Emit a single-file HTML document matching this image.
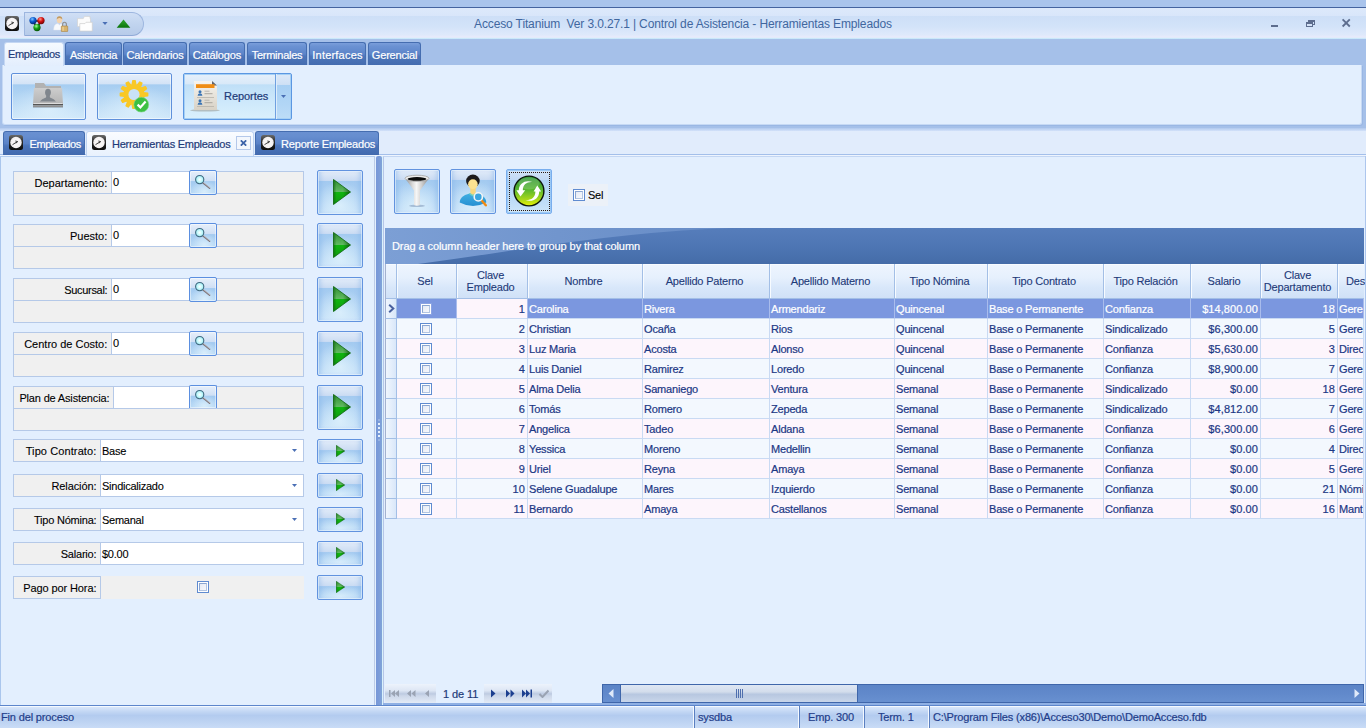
<!DOCTYPE html>
<html lang="es">
<head>
<meta charset="utf-8">
<title>Acceso Titanium</title>
<style>
*,*:before,*:after{box-sizing:border-box;margin:0;padding:0}
html,body{width:1366px;height:728px;overflow:hidden}
body{position:relative;-webkit-text-stroke:.2px;background:#e3effe;font-family:"Liberation Sans","DejaVu Sans",sans-serif;font-size:11px;color:#1e3a78;line-height:13px}
div,span,i,b,svg{position:absolute;white-space:nowrap}
b{font-weight:normal}
i{font-style:normal}
/* top chrome */
#topstrip{left:0;top:0;width:1366px;height:7px;background:#a9c4ec}
#topline{left:0;top:7px;width:1366px;height:1px;background:#44639f}
#titlebar{left:0;top:8px;width:1366px;height:31px;background:linear-gradient(#dde9fb 0,#d9e6fa 25%,#cddff7 26%,#d3e3f9 60%,#dfe9fb 88%,#e6eafb 90%,#e6eafb 95%,#d4effc 96%,#c4e3f8 100%)}
#title{-webkit-text-stroke:0;left:0;width:1366px;top:16px;text-align:center;font-size:12px;color:#41679f;line-height:16px;letter-spacing:-0.13px}
#qat{left:24px;top:12px;width:120px;height:24px;border:1px solid #9db6df;border-bottom-color:#8fa9d6;border-radius:0 12px 12px 0;background:linear-gradient(#d0dff5,#c1d4ef 50%,#b7cbe9)}
#tabstrip{left:0;top:39px;width:1366px;height:26px;background:linear-gradient(#c3d7f4 0,#a5c0e9 12%,#a5c0e9 100%)}
.rtab{top:42px;height:23px;padding-top:1px;border:1px solid #456db0;border-bottom:none;border-radius:3px 3px 0 0;background:linear-gradient(#7a9eda 0,#6b92d3 15%,#5d85c9 50%,#4d76ba 60%,#446cb0 100%);color:#fff;font-size:11px;line-height:23px;text-align:center;letter-spacing:-0.3px}
.rtab.on{background:linear-gradient(#f6faff,#e3eefd);color:#1e3a78;border-color:#c4d7f3;height:24px;padding-top:0}
#ribbon{left:2px;top:65px;width:1360px;height:60px;background:#e3effe;border:1px solid #c6d9f4;border-top:none;border-radius:0 0 3px 3px;box-shadow:1px 1px 0 #9ab7e4}
#ribside{left:0;top:39px;width:1366px;height:89px;background:#a5c0e9}
#ribbot{left:0;top:128px;width:1366px;height:3px;background:linear-gradient(#b0c8ee,#d3e2f9)}
.bigbtn{border:1px solid #5f90db;border-radius:2px;background:radial-gradient(ellipse 60% 55% at 50% 80%,rgba(225,243,253,.7),rgba(225,243,253,0)),linear-gradient(#e6effa 0,#d3e3f6 22%,#a6cdf1 24%,#b9d9f5 65%,#cfe7f9 100%);box-shadow:inset 0 0 0 1px rgba(255,255,255,.5)}
.bigbtn.hot{border-color:#5b97e2;background:linear-gradient(#e6f0fb 0,#d9e9f8 22%,#bfdff7 24%,#cde8fb 60%,#daf0fc 100%);box-shadow:inset 0 0 0 1px #a6d0f5}
/* doc tabs */
#docstrip{left:0;top:131px;width:1366px;height:24px;background:#e1ecfc}
.dtab{top:131px;height:24px;padding-top:1px;border:1px solid #456db0;border-bottom:none;border-radius:3px 3px 0 0;background:linear-gradient(#6a90d1 0,#668dcf 20%,#5a82c7 50%,#4b74b9 60%,#4169ae 100%);color:#fff;font-size:11px;line-height:23px;letter-spacing:-0.3px}
.dtab.on{background:linear-gradient(#fafcff,#e8f1fd);color:#1e3a78;border-color:#c0d4f2;height:25px}
#docline{left:0;top:154px;width:1366px;height:2px;background:linear-gradient(#a3bfea 50%,#eef4fe 50%)}
/* panels */
#left{left:0;top:156px;width:375px;height:549px;background:#e3effe;border:1px solid #b3cdf0;border-left-color:#aac6ed;border-right-color:#bccbe6;border-bottom:none}
#split{left:376px;top:156px;width:6px;height:549px;border-radius:2px 2px 0 0;background:linear-gradient(90deg,#7797d8 0,#7b9cd9 50%,#80a4d8 100%)}
#right{left:383px;top:156px;width:983px;height:549px;background:#e3effe;border:1px solid #c3d6f3;border-left-color:#b7c6e8;border-right:none;border-bottom:none;box-shadow:-1px 0 0 #d9f1fc}
/* form */
.grp{left:13px;width:291px;height:45px;background:#f0f0f0;border:1px solid #b5c9e8}
.grp .sep{left:0;top:21px;width:289px;height:1px;background:#b5c9e8}
.grp .vs{top:0;width:1px;height:21px;background:#b5c9e8}
.grp .in{top:0;height:21px;background:#fff}
.lab{-webkit-text-stroke:.1px;color:#000;text-align:right;font-size:11px;line-height:14px;letter-spacing:-0.05px}
.val{-webkit-text-stroke:.1px;color:#000;font-size:11px;line-height:14px;letter-spacing:-0.25px}
.sbtn{width:28px;height:25px;border:1px solid #5b8fe0;border-radius:2px;background:radial-gradient(ellipse 55% 50% at 55% 90%,rgba(225,243,253,.8),rgba(225,243,253,0)),linear-gradient(#e6effa 0,#d0e0f5 42%,#a3caf0 46%,#b6d8f5 100%);box-shadow:inset 0 0 0 1px rgba(255,255,255,.45)}
.play{left:317px;width:46px;height:45px;border:1px solid #6293df;border-radius:2px;background:radial-gradient(ellipse 60% 55% at 50% 80%,rgba(225,243,253,.8),rgba(225,243,253,0)),linear-gradient(#e3edf9 0,#cbdcf3 22%,#a3caf0 24%,#b2d5f4 70%,#c6e1f8 100%);box-shadow:inset 0 0 0 1px rgba(235,245,254,.6),inset 5px 0 5px -3px rgba(120,170,232,.5),inset -5px 0 5px -3px rgba(120,170,232,.5)}
.play.sm{height:25px;background:radial-gradient(ellipse 60% 50% at 50% 90%,rgba(225,243,253,.8),rgba(225,243,253,0)),linear-gradient(#e3edf9 0,#cbdcf3 42%,#a3caf0 46%,#b9daf6 100%)}
.play.foc{border-color:#79aeee;box-shadow:inset 0 0 0 1px #9cc8f4;background:linear-gradient(#d3e3f7 0,#c3d9f4 22%,#b0d3f5 24%,#bddbf7 70%,#cde5f9 100%)}
.row1{left:13px;width:291px;height:23px;background:#fff;border:1px solid #b5c9e8}
.row1 .l{left:0;top:0;width:87px;height:21px;background:#f0f0f0;border-right:1px solid #b5c9e8}
/* grid */
#groupby{left:385px;top:228px;width:979px;height:36px;background:linear-gradient(#567dbb 0,#4e76b4 50%,#456ca8 100%);overflow:hidden}
#groupby b{left:7px;top:0;color:#fff;font-size:11px;line-height:36px;letter-spacing:-0.08px}
.hd{-webkit-text-stroke:.1px;top:264px;height:35px;background:linear-gradient(#eef5fe 0,#e6f0fd 40%,#d8e7fa 70%,#d0e1f7 100%);border-right:1px solid #a3bfe6;border-bottom:1px solid #a3bfe6;box-shadow:inset 1px 1px 0 #f7fbff;color:#1e3a78;text-align:center;font-size:11px;line-height:12px;display:flex;align-items:center;justify-content:center;white-space:normal;letter-spacing:-0.2px;padding:0 3px 1px 0}
.gr{left:385px;width:979px;height:20px;overflow:hidden}
.gr span{top:0;height:20px;line-height:20px;font-size:11px;letter-spacing:-0.18px;border-right:1px solid #c9daf3;border-bottom:1px solid #c9daf3;padding:0 2px 0 1px;overflow:hidden;color:#1b3784;-webkit-text-stroke:.2px}
.gr.a span{background:#f3f8fe}
.gr.b span{background:#fdf5fc}
.gr.sel span{background:#7b97df;color:#fff;border-right-color:#a9bcec;border-bottom-color:#c9daf3}
.gr.sel span.foc{background:#fdf5fc;color:#1b3784}
.gr span.ind{left:0;width:12px;background:linear-gradient(90deg,#f0f6fe,#d9e7f9);border-left:1px solid #a3b1cf;border-right:1px solid #a3bfe6;border-bottom:1px solid #a3bfe6;padding:0}
.gr span.r{text-align:right;letter-spacing:0.08px}
.cb{width:12px;height:12px;border:1px solid #5f8bd0;background:#fff}
.gr.sel .cb{border-color:#8aa3e3}
.cb:after{content:"";position:absolute;left:1px;top:1px;width:8px;height:8px;border:1px solid;border-color:#8ba6d2 #b3c5e2 #b3c5e2 #8ba6d2;background:linear-gradient(135deg,#e6ebf5,#f6f8fc)}
/* navigator */
.nav{top:684px;height:19px;background:linear-gradient(#edf3fc 0,#dde6f4 35%,#bccae1 52%,#ccd7e9 62%,#e3ebf7 100%)}
#sb{left:602px;top:684px;width:762px;height:19px;background:linear-gradient(#5c85c7,#6189cb 50%,#6890d0);border:1px solid #3f66aa}
#thumb{left:17px;top:0;width:238px;height:17px;background:linear-gradient(#dfe7f3 0,#d3ddec 40%,#b7c7e0 55%,#c9d6ea 100%);border-left:1px solid #3f66aa;border-right:1px solid #3f66aa}
#rband{left:383px;top:703px;width:983px;height:2px;background:#8fb0e4}
#redge{left:1365px;top:156px;width:1px;height:547px;background:#adc6ed}
#gleft{left:385px;top:264px;width:1px;height:35px;background:#a3b1cf}
/* status */
#status{left:0;top:703px;width:1366px;height:25px;background:linear-gradient(rgba(0,0,0,0) 0,rgba(0,0,0,0) 8%,#5d86cc 8%,#5d86cc 12%,#f4f9ff 12%,#f4f9ff 16%,#d9e7fb 16%,#c3d7f4 34%,#b3cbef 50%,#bcd2f2 72%,#c9dcf6 100%);color:#1f3d8a;font-size:11px;line-height:22px;letter-spacing:-0.15px}
#status b{top:3px;height:22px}
#status i{top:3px;width:2px;height:22px;background:linear-gradient(90deg,#f4f9ff 50%,#5a7fc0 50%)}
</style>
</head>
<body>
<svg width="0" height="0" style="left:0;top:0"><defs><linearGradient id="ck" x1="0" y1="0" x2="0" y2="1"><stop offset="0" stop-color="#6a6a6a"/><stop offset=".45" stop-color="#2a2a2a"/><stop offset="1" stop-color="#0c0c0c"/></linearGradient><linearGradient id="pga" x1="0" y1="0" x2="0" y2="1"><stop offset="0" stop-color="#2f8f2f"/><stop offset=".5" stop-color="#62ba62"/><stop offset=".5" stop-color="#10b510"/><stop offset="1" stop-color="#0f9a0f"/></linearGradient><linearGradient id="pgb" x1="0" y1="0" x2="1" y2="0"><stop offset="0" stop-color="#0a5a0a" stop-opacity=".55"/><stop offset=".18" stop-color="#0a5a0a" stop-opacity="0"/><stop offset=".55" stop-color="#0a5a0a" stop-opacity="0"/><stop offset="1" stop-color="#063e06" stop-opacity=".75"/></linearGradient><radialGradient id="mg"><stop offset="0" stop-color="#ffffff"/><stop offset=".35" stop-color="#d9fcfd"/><stop offset="1" stop-color="#9ceef6"/></radialGradient></defs></svg>
<div id="topstrip"></div><div id="topline"></div><div id="titlebar"></div>
<div id="title">Acceso Titanium&nbsp; Ver 3.0.27.1 | Control de Asistencia - Herramientas Empleados</div>
<svg style="left:5px;top:16px" width="14" height="15" viewBox="0 0 14 15"><rect x="0" y="0" width="14" height="15" rx="2.5" fill="url(#ck)"/><circle cx="7" cy="7.5" r="5.7" fill="#f7f5f5"/><circle cx="7" cy="7.5" r="4.6" fill="none" stroke="#e9d9d9" stroke-width=".7" stroke-dasharray=".6 1.810"/><path d="M3.5 9.7 L8 6.8" stroke="#2a2a2a" stroke-width=".9"/><path d="M6.3 6 L8.8 6.6 L6.8 8.2" fill="none" stroke="#2a2a2a" stroke-width=".8"/></svg>
<div id="qat"></div>
<svg style="left:27px;top:15px" width="20" height="18" viewBox="0 0 20 18"><defs>
<radialGradient id="gb" cx=".4" cy=".3" r=".7"><stop offset="0" stop-color="#7fc4ff"/><stop offset=".5" stop-color="#0a5bd0"/><stop offset="1" stop-color="#062a78"/></radialGradient>
<radialGradient id="grd" cx=".4" cy=".3" r=".7"><stop offset="0" stop-color="#ff9a8a"/><stop offset=".5" stop-color="#d41010"/><stop offset="1" stop-color="#6e0505"/></radialGradient>
<radialGradient id="gg" cx=".4" cy=".3" r=".7"><stop offset="0" stop-color="#a7ff9a"/><stop offset=".5" stop-color="#12a012"/><stop offset="1" stop-color="#065006"/></radialGradient></defs>
<path d="M6 6 L14 6 L10 13 Z" fill="none" stroke="#222" stroke-width="1.6"/>
<circle cx="6" cy="5.6" r="3.6" fill="url(#gb)"/><circle cx="14" cy="5.6" r="3.6" fill="url(#grd)"/><circle cx="10" cy="12.6" r="3.6" fill="url(#gg)"/></svg>
<svg style="left:53px;top:15px" width="16" height="17" viewBox="0 0 16 17"><path d="M0.6 15 Q0.6 8.8 5 8.6 L6.5 10 L8 8.6 Q9.5 8.8 9.5 15 Z" fill="#f7f9fc" stroke="#dfe4ee" stroke-width=".4"/><ellipse cx="6.5" cy="4.9" rx="2.7" ry="3.3" fill="#f3d3ae"/><path d="M3.7 4.6 Q3.6 1.2 6.5 1.2 Q9.4 1.2 9.3 4.6 Q8.5 2.8 6.5 2.9 Q4.5 2.8 3.7 4.600Z" fill="#c09a62"/><path d="M9.6 11.2 V9.6 Q9.6 7.3 11.5 7.3 Q13.4 7.3 13.4 9.6 V11.2" fill="none" stroke="#8f8f8f" stroke-width="1.1"/><rect x="8.3" y="11" width="6.4" height="5.6" rx=".6" fill="#d8b46e" stroke="#a8823f" stroke-width=".6"/><rect x="9.3" y="11.8" width="1.6" height="4" fill="#ecd29a" opacity=".8"/></svg>
<svg style="left:77px;top:15px" width="17" height="17" viewBox="0 0 17 17"><path d="M0.5 3.6 H6.3 L7.3 1.4 H13 V3.6 H13.5 V11.5 H0.5 Z" fill="#fbfbfb" stroke="#d2d2d2" stroke-width=".7"/><path d="M2.8 8.6 H8 L9 7.3 H15.3 V16.1 H2.8 Z" fill="#fefefe" stroke="#cfcfcf" stroke-width=".7"/></svg>
<svg style="left:102px;top:22px" width="6" height="3" viewBox="0 0 7 4"><path d="M0 0 H7 L3.5 4 Z" fill="#4a6fb5"/></svg>
<svg style="left:116px;top:19px" width="15" height="9" viewBox="0 0 15 9"><defs><linearGradient id="gt" x1="0" y1="0" x2="0" y2="1"><stop offset="0" stop-color="#2fa52f"/><stop offset="1" stop-color="#0b740b"/></linearGradient></defs><path d="M7.5 0.6 L14.3 8.7 H0.7 Z" fill="url(#gt)"/></svg>
<svg style="left:1268px;top:16px" width="90" height="14" viewBox="0 0 90 14"><rect x="3" y="9" width="7" height="2" fill="#5d6d8e"/><rect x="40.5" y="4.5" width="6" height="4" fill="none" stroke="#5d6d8e" stroke-width="1"/><rect x="40" y="4" width="7" height="2" fill="#5d6d8e"/><rect x="38.5" y="6.5" width="6" height="4" fill="#d5e3f8" stroke="#5d6d8e" stroke-width="1"/><rect x="38" y="6" width="7" height="2" fill="#5d6d8e"/><path d="M74.6 3.3 L81.8 10.5 M81.8 3.3 L74.6 10.5" stroke="#5d6d8e" stroke-width="1.8"/></svg>
<div id="ribside"></div><div id="ribbon"></div><div id="ribbot"></div>
<div class="rtab on" style="left:4px;width:60px;letter-spacing:-0.36px">Empleados</div>
<div class="rtab" style="left:65px;width:57px;letter-spacing:-0.3px">Asistencia</div>
<div class="rtab" style="left:123px;width:64px;letter-spacing:-0.15px">Calendarios</div>
<div class="rtab" style="left:189px;width:56px;letter-spacing:-0.12px">Catálogos</div>
<div class="rtab" style="left:247px;width:60px;letter-spacing:-0.25px">Terminales</div>
<div class="rtab" style="left:309px;width:57px;letter-spacing:0.2px">Interfaces</div>
<div class="rtab" style="left:368px;width:53px;letter-spacing:-0.2px">Gerencial</div>
<div class="bigbtn" style="left:11px;top:73px;width:75px;height:47px"></div>
<div class="bigbtn" style="left:97px;top:73px;width:75px;height:47px"></div>
<div class="bigbtn hot" style="left:183px;top:73px;width:109px;height:47px"><i style="left:93px;top:1px;width:13px;height:43px;background:linear-gradient(#dbe8f8 0,#cfe0f5 22%,#a8cff3 24%,#b2d6f6 70%,#bcdcf7 100%)"></i><i style="left:91px;top:0;width:1px;height:45px;background:#6fa0e0"></i><i style="left:92px;top:0;width:1px;height:45px;background:#dcedfb"></i></div>
<svg style="left:32px;top:82px" width="32" height="27" viewBox="0 0 32 27"><defs><linearGradient id="fg" x1="0" y1="0" x2="0" y2="1"><stop offset="0" stop-color="#cdcdcd"/><stop offset="1" stop-color="#b4b4b4"/></linearGradient></defs>
<path d="M3 1 H12 L14 4 H29 V22 H3 Z" fill="#b2b2b2"/><path d="M2 6 H30 L31 22 H1 Z" fill="url(#fg)"/><rect x="1.5" y="21" width="29" height="1" fill="#dcdcdc"/><rect x="1" y="22" width="30" height="1.4" fill="#555"/><rect x="1" y="23.4" width="30" height="1.7" fill="#8f8f8f"/><rect x="1" y="25" width="30" height=".8" fill="#7d8894" opacity=".5"/>
<ellipse cx="16" cy="10.4" rx="2.9" ry="3.6" fill="#80868d"/><path d="M7.9 19.6 Q9.5 17 14 15.6 L14.4 12.8 H17.6 L18 15.6 Q22.5 17 23.9 19.6 Z" fill="#80868d"/></svg>
<svg style="left:119px;top:79px" width="34" height="36" viewBox="0 0 34 36"><path d="M13.8 1.8 L16.2 1.8 L16.9 5.9 L18.2 6.2 L20.8 3.0 L22.9 4.2 L21.4 8.1 L22.4 9.1 L26.3 7.6 L27.5 9.7 L24.3 12.3 L24.6 13.6 L28.7 14.3 L28.7 16.7 L24.6 17.4 L24.3 18.7 L27.5 21.3 L26.3 23.4 L22.4 21.9 L21.4 22.9 L22.9 26.8 L20.8 28.0 L18.2 24.8 L16.9 25.1 L16.2 29.2 L13.8 29.2 L13.1 25.1 L11.8 24.8 L9.2 28.0 L7.1 26.8 L8.6 22.9 L7.6 21.9 L3.7 23.4 L2.5 21.3 L5.7 18.7 L5.4 17.4 L1.3 16.7 L1.3 14.3 L5.4 13.6 L5.7 12.3 L2.5 9.7 L3.7 7.6 L7.6 9.1 L8.6 8.1 L7.1 4.2 L9.2 3.0 L11.8 6.2 L13.1 5.9Z" fill="#f9c825" stroke="#f9c825" stroke-width="1.4" stroke-linejoin="round"/><circle cx="15" cy="15.5" r="5.6" fill="#c9e2f8"/><circle cx="22.3" cy="25.7" r="7.4" fill="#3cc043"/><circle cx="22.3" cy="25.7" r="7.4" fill="none" stroke="#7fd98a" stroke-width=".6"/><path d="M18.6 25.6 L21.4 28.4 L26.6 22.6" fill="none" stroke="#fff" stroke-width="2.2"/></svg>
<svg style="left:190px;top:79px" width="32" height="34" viewBox="0 0 32 34"><defs><linearGradient id="dg" x1="0" y1="0" x2="0" y2="1"><stop offset="0" stop-color="#f6f4ef"/><stop offset="1" stop-color="#d8d2c6"/></linearGradient></defs>
<ellipse cx="15" cy="31.3" rx="15" ry="1.3" fill="#8b8678" opacity=".45"/>
<path d="M4 2 H22 L27 6.5 V31 H4 Z" fill="url(#dg)"/><path d="M22 2 L27 6.5 H22 Z" fill="#5d6470"/>
<g transform="translate(0,-.8)"><rect x="6" y="6" width="18.5" height="3.8" fill="#ef8d14"/>
<circle cx="10" cy="13.5" r="1.5" fill="#3a74b4"/><path d="M7.6 17.5 Q7.6 15 10 15 Q12.4 15 12.4 17.5 Z" fill="#3a74b4"/><rect x="14.5" y="12.5" width="5" height="1" fill="#b9b6ae"/><rect x="14.5" y="15" width="8" height="1" fill="#a9a69e"/>
<rect x="7" y="19" width="17" height=".8" fill="#b7b3aa"/>
<circle cx="10" cy="22.5" r="1.5" fill="#3a74b4"/><path d="M7.6 26.5 Q7.6 24 10 24 Q12.4 24 12.4 26.5 Z" fill="#3a74b4"/><rect x="14.5" y="21.5" width="5" height="1" fill="#b9b6ae"/><rect x="14.5" y="24" width="8" height="1" fill="#a9a69e"/>
<rect x="7" y="28" width="17" height=".8" fill="#b7b3aa"/></g></svg>
<div style="left:224px;top:89px;font-size:11px;line-height:14px;color:#1e3a78;letter-spacing:-0.05px">Reportes</div>
<svg style="left:281px;top:95px" width="5" height="3" viewBox="0 0 7 4"><path d="M0 0 H7 L3.5 4 Z" fill="#4a6fb5"/></svg>
<div id="docstrip"></div><div id="docline"></div>
<div class="dtab" style="left:3px;width:82px"><b style="left:25.500px;letter-spacing:-.42px">Empleados</b></div><svg style="left:9px;top:135px" width="14" height="15" viewBox="0 0 14 15"><rect x="0" y="0" width="14" height="15" rx="2.5" fill="url(#ck)"/><circle cx="7" cy="7.5" r="5.7" fill="#f7f5f5"/><circle cx="7" cy="7.5" r="4.6" fill="none" stroke="#e9d9d9" stroke-width=".7" stroke-dasharray=".6 1.810"/><path d="M3.5 9.7 L8 6.8" stroke="#2a2a2a" stroke-width=".9"/><path d="M6.3 6 L8.8 6.6 L6.8 8.2" fill="none" stroke="#2a2a2a" stroke-width=".8"/></svg>
<div class="dtab on" style="left:86px;width:168px"><b style="left:25px;letter-spacing:-.26px">Herramientas Empleados</b></div><svg style="left:92px;top:135px" width="14" height="15" viewBox="0 0 14 15"><rect x="0" y="0" width="14" height="15" rx="2.5" fill="url(#ck)"/><circle cx="7" cy="7.5" r="5.7" fill="#f7f5f5"/><circle cx="7" cy="7.5" r="4.6" fill="none" stroke="#e9d9d9" stroke-width=".7" stroke-dasharray=".6 1.810"/><path d="M3.5 9.7 L8 6.8" stroke="#2a2a2a" stroke-width=".9"/><path d="M6.3 6 L8.8 6.6 L6.8 8.2" fill="none" stroke="#2a2a2a" stroke-width=".8"/></svg>
<div style="left:236px;top:136px;width:15px;height:14px;border:1px solid #b4c8ea;background:#f3f7fd"></div><svg style="left:240px;top:140px" width="7" height="6" viewBox="0 0 7 6"><path d="M0.8 0.3 L6.2 5.7 M6.2 0.3 L0.8 5.7" stroke="#3b62a8" stroke-width="1.7"/></svg>
<div class="dtab" style="left:255px;width:124px"><b style="left:25px;letter-spacing:-.18px">Reporte Empleados</b></div><svg style="left:261px;top:135px" width="14" height="15" viewBox="0 0 14 15"><rect x="0" y="0" width="14" height="15" rx="2.5" fill="url(#ck)"/><circle cx="7" cy="7.5" r="5.7" fill="#f7f5f5"/><circle cx="7" cy="7.5" r="4.6" fill="none" stroke="#e9d9d9" stroke-width=".7" stroke-dasharray=".6 1.810"/><path d="M3.5 9.7 L8 6.8" stroke="#2a2a2a" stroke-width=".9"/><path d="M6.3 6 L8.8 6.6 L6.8 8.2" fill="none" stroke="#2a2a2a" stroke-width=".8"/></svg>
<div id="left"></div><div id="split"></div><div id="right"></div>
<svg style="left:377px;top:418px" width="4" height="24" viewBox="0 0 4 24"><rect x="1" y="1" width="2" height="2" fill="#e6f0fd" opacity="0.25"/><rect x="1" y="5" width="2" height="2" fill="#e6f0fd" opacity="1"/><rect x="1" y="9" width="2" height="2" fill="#e6f0fd" opacity="1"/><rect x="1" y="13" width="2" height="2" fill="#e6f0fd" opacity="1"/><rect x="1" y="17" width="2" height="2" fill="#e6f0fd" opacity="1"/><rect x="1" y="21" width="2" height="2" fill="#e6f0fd" opacity="0.25"/></svg>
<div class="grp" style="top:171px"><i class="in" style="left:97px;width:78px"></i><i class="vs" style="left:97px"></i><i class="sep"></i><b class="lab" style="left:0;top:4px;width:93.3px;letter-spacing:0.0px">Departamento:</b><b class="val" style="left:99px;top:3px">0</b></div>
<div class="sbtn" style="left:189px;top:170px"></div><svg style="left:194px;top:174px" width="18" height="16" viewBox="0 0 18 16"><path d="M9 8.8 L15.6 14.2" stroke="#7d7478" stroke-width="1.5" stroke-linecap="round"/><path d="M9.4 8.4 L15.8 13.7" stroke="#d9dde6" stroke-width=".6" stroke-linecap="round"/><circle cx="5.7" cy="5.6" r="4.1" fill="url(#mg)" stroke="#41697f" stroke-width="1.1"/></svg>
<div class="play" style="top:170px"></div><svg style="left:332.6px;top:179px" width="18" height="26" viewBox="0 0 18 26" preserveAspectRatio="none"><path d="M0.5 0.5 L17.5 13 L0.5 25.5 Z" fill="url(#pga)"/><path d="M0.5 0.5 L17.5 13 L0.5 25.5 Z" fill="url(#pgb)" stroke="#0c640c" stroke-width=".8"/></svg>
<div class="grp" style="top:224px"><i class="in" style="left:97px;width:78px"></i><i class="vs" style="left:97px"></i><i class="sep"></i><b class="lab" style="left:0;top:4px;width:93.3px;letter-spacing:0.0px">Puesto:</b><b class="val" style="left:99px;top:3px">0</b></div>
<div class="sbtn" style="left:189px;top:223px"></div><svg style="left:194px;top:227px" width="18" height="16" viewBox="0 0 18 16"><path d="M9 8.8 L15.6 14.2" stroke="#7d7478" stroke-width="1.5" stroke-linecap="round"/><path d="M9.4 8.4 L15.8 13.7" stroke="#d9dde6" stroke-width=".6" stroke-linecap="round"/><circle cx="5.7" cy="5.6" r="4.1" fill="url(#mg)" stroke="#41697f" stroke-width="1.1"/></svg>
<div class="play" style="top:223px"></div><svg style="left:332.6px;top:232px" width="18" height="26" viewBox="0 0 18 26" preserveAspectRatio="none"><path d="M0.5 0.5 L17.5 13 L0.5 25.5 Z" fill="url(#pga)"/><path d="M0.5 0.5 L17.5 13 L0.5 25.5 Z" fill="url(#pgb)" stroke="#0c640c" stroke-width=".8"/></svg>
<div class="grp" style="top:278px"><i class="in" style="left:97px;width:78px"></i><i class="vs" style="left:97px"></i><i class="sep"></i><b class="lab" style="left:0;top:4px;width:93.3px;letter-spacing:-0.3px">Sucursal:</b><b class="val" style="left:99px;top:3px">0</b></div>
<div class="sbtn" style="left:189px;top:277px"></div><svg style="left:194px;top:281px" width="18" height="16" viewBox="0 0 18 16"><path d="M9 8.8 L15.6 14.2" stroke="#7d7478" stroke-width="1.5" stroke-linecap="round"/><path d="M9.4 8.4 L15.8 13.7" stroke="#d9dde6" stroke-width=".6" stroke-linecap="round"/><circle cx="5.7" cy="5.6" r="4.1" fill="url(#mg)" stroke="#41697f" stroke-width="1.1"/></svg>
<div class="play" style="top:277px"></div><svg style="left:332.6px;top:286px" width="18" height="26" viewBox="0 0 18 26" preserveAspectRatio="none"><path d="M0.5 0.5 L17.5 13 L0.5 25.5 Z" fill="url(#pga)"/><path d="M0.5 0.5 L17.5 13 L0.5 25.5 Z" fill="url(#pgb)" stroke="#0c640c" stroke-width=".8"/></svg>
<div class="grp" style="top:332px"><i class="in" style="left:97px;width:78px"></i><i class="vs" style="left:97px"></i><i class="sep"></i><b class="lab" style="left:0;top:4px;width:93.3px;letter-spacing:0.0px">Centro de Costo:</b><b class="val" style="left:99px;top:3px">0</b></div>
<div class="sbtn" style="left:189px;top:331px"></div><svg style="left:194px;top:335px" width="18" height="16" viewBox="0 0 18 16"><path d="M9 8.8 L15.6 14.2" stroke="#7d7478" stroke-width="1.5" stroke-linecap="round"/><path d="M9.4 8.4 L15.8 13.7" stroke="#d9dde6" stroke-width=".6" stroke-linecap="round"/><circle cx="5.7" cy="5.6" r="4.1" fill="url(#mg)" stroke="#41697f" stroke-width="1.1"/></svg>
<div class="play" style="top:331px"></div><svg style="left:332.6px;top:340px" width="18" height="26" viewBox="0 0 18 26" preserveAspectRatio="none"><path d="M0.5 0.5 L17.5 13 L0.5 25.5 Z" fill="url(#pga)"/><path d="M0.5 0.5 L17.5 13 L0.5 25.5 Z" fill="url(#pgb)" stroke="#0c640c" stroke-width=".8"/></svg>
<div class="grp" style="top:386px"><i class="in" style="left:99px;width:76px"></i><i class="vs" style="left:99px"></i><i class="sep"></i><b class="lab" style="left:0;top:4px;width:95.3px;letter-spacing:-0.16px">Plan de Asistencia:</b><b class="val" style="left:101px;top:3px"></b></div>
<div class="sbtn" style="left:189px;top:385px;height:23px;border-bottom:none;border-radius:2px 2px 0 0"></div><svg style="left:194px;top:389px" width="18" height="16" viewBox="0 0 18 16"><path d="M9 8.8 L15.6 14.2" stroke="#7d7478" stroke-width="1.5" stroke-linecap="round"/><path d="M9.4 8.4 L15.8 13.7" stroke="#d9dde6" stroke-width=".6" stroke-linecap="round"/><circle cx="5.7" cy="5.6" r="4.1" fill="url(#mg)" stroke="#41697f" stroke-width="1.1"/></svg>
<div class="play" style="top:385px"></div><svg style="left:332.6px;top:394px" width="18" height="26" viewBox="0 0 18 26" preserveAspectRatio="none"><path d="M0.5 0.5 L17.5 13 L0.5 25.5 Z" fill="url(#pga)"/><path d="M0.5 0.5 L17.5 13 L0.5 25.5 Z" fill="url(#pgb)" stroke="#0c640c" stroke-width=".8"/></svg>
<div class="row1" style="top:439px"><i class="l"></i><b class="lab" style="left:0;top:4px;width:82.400px;letter-spacing:0.1px">Tipo Contrato:</b><b class="val" style="left:88px;top:4px">Base</b></div>
<svg style="left:292px;top:449px" width="5" height="3" viewBox="0 0 7 4"><path d="M0 0 H7 L3.5 4 Z" fill="#4a6fb5"/></svg>
<div class="play sm" style="top:439px"></div><svg style="left:336px;top:445px" width="9" height="12" viewBox="0 0 18 26" preserveAspectRatio="none"><path d="M0.5 0.5 L17.5 13 L0.5 25.5 Z" fill="url(#pga)"/><path d="M0.5 0.5 L17.5 13 L0.5 25.5 Z" fill="url(#pgb)" stroke="#0c640c" stroke-width=".8"/></svg>
<div class="row1" style="top:474px"><i class="l"></i><b class="lab" style="left:0;top:4px;width:82.400px;letter-spacing:-0.1px">Relación:</b><b class="val" style="left:88px;top:4px">Sindicalizado</b></div>
<svg style="left:292px;top:484px" width="5" height="3" viewBox="0 0 7 4"><path d="M0 0 H7 L3.5 4 Z" fill="#4a6fb5"/></svg>
<div class="play sm" style="top:473px"></div><svg style="left:336px;top:479px" width="9" height="12" viewBox="0 0 18 26" preserveAspectRatio="none"><path d="M0.5 0.5 L17.5 13 L0.5 25.5 Z" fill="url(#pga)"/><path d="M0.5 0.5 L17.5 13 L0.5 25.5 Z" fill="url(#pgb)" stroke="#0c640c" stroke-width=".8"/></svg>
<div class="row1" style="top:508px"><i class="l"></i><b class="lab" style="left:0;top:4px;width:82.400px;letter-spacing:-0.22px">Tipo Nómina:</b><b class="val" style="left:88px;top:4px">Semanal</b></div>
<svg style="left:292px;top:518px" width="5" height="3" viewBox="0 0 7 4"><path d="M0 0 H7 L3.5 4 Z" fill="#4a6fb5"/></svg>
<div class="play sm" style="top:507px"></div><svg style="left:336px;top:513px" width="9" height="12" viewBox="0 0 18 26" preserveAspectRatio="none"><path d="M0.5 0.5 L17.5 13 L0.5 25.5 Z" fill="url(#pga)"/><path d="M0.5 0.5 L17.5 13 L0.5 25.5 Z" fill="url(#pgb)" stroke="#0c640c" stroke-width=".8"/></svg>
<div class="row1" style="top:542px"><i class="l"></i><b class="lab" style="left:0;top:4px;width:82.400px;letter-spacing:-0.2px">Salario:</b><b class="val" style="left:88px;top:4px">$0.00</b></div>
<div class="play sm" style="top:541px"></div><svg style="left:336px;top:547px" width="9" height="12" viewBox="0 0 18 26" preserveAspectRatio="none"><path d="M0.5 0.5 L17.5 13 L0.5 25.5 Z" fill="url(#pga)"/><path d="M0.5 0.5 L17.5 13 L0.5 25.5 Z" fill="url(#pgb)" stroke="#0c640c" stroke-width=".8"/></svg>
<div style="left:101px;top:576px;width:203px;height:23px;background:#f0f0f0"></div>
<div style="left:13px;top:576px;width:88px;height:23px;background:#f0f0f0;border:1px solid #b5c9e8"><b class="lab" style="left:0;top:4px;width:82.400px;letter-spacing:-.1px">Pago por Hora:</b></div>
<div class="cb" style="left:197px;top:581px"></div>
<div class="play sm" style="top:575px"></div><svg style="left:336px;top:581px" width="9" height="12" viewBox="0 0 18 26" preserveAspectRatio="none"><path d="M0.5 0.5 L17.5 13 L0.5 25.5 Z" fill="url(#pga)"/><path d="M0.5 0.5 L17.5 13 L0.5 25.5 Z" fill="url(#pgb)" stroke="#0c640c" stroke-width=".8"/></svg>
<div class="play" style="left:394px;top:169px"></div>
<div class="play" style="left:450px;top:169px"></div>
<div class="play foc" style="left:506px;top:169px"></div>
<div style="left:509px;top:172px;width:41px;height:39px;border:1px dotted #2a1a10"></div>
<svg style="left:403px;top:173px" width="28" height="36" viewBox="0 0 28 36"><defs><linearGradient id="fn" x1="0" y1="0" x2="1" y2="0"><stop offset="0" stop-color="#8e8e8e"/><stop offset=".3" stop-color="#d8d8d8"/><stop offset=".48" stop-color="#f6f6f6"/><stop offset=".7" stop-color="#cfcfcf"/><stop offset="1" stop-color="#8a8a8a"/></linearGradient></defs>
<ellipse cx="14" cy="32.8" rx="8" ry="1.2" fill="#6d84a8" opacity=".45"/>
<path d="M2.2 5.5 Q14 10.5 25.8 5.5 L17 17.5 V32 Q14 33.4 11 32 V17.5 Z" fill="url(#fn)"/>
<ellipse cx="14" cy="5.3" rx="12" ry="3.1" fill="#ececec" stroke="#a3a3a3" stroke-width=".8"/><ellipse cx="14" cy="5.9" rx="9.4" ry="1.8" fill="#0c0c0c"/></svg>
<svg style="left:458px;top:173px" width="30" height="36" viewBox="0 0 30 36"><defs><linearGradient id="ub" x1="0" y1="0" x2="0" y2="1"><stop offset="0" stop-color="#3fb0e3"/><stop offset="1" stop-color="#2790d2"/></linearGradient></defs>
<path d="M1.7 29.5 Q2 21.5 15 20 Q28 21.5 28.3 29.5 Q15 36.5 1.7 29.500Z" fill="url(#ub)"/>
<path d="M12.3 15 H17.7 V21 L15 23 L12.3 21Z" fill="#f7d77f"/><path d="M10.5 20.8 L15 23.6 L19.5 20.8 L18 20 L15 21.8 L12 20Z" fill="#6fd0c0"/>
<ellipse cx="14.9" cy="8" rx="6.8" ry="6.4" fill="#1c1a1c"/>
<ellipse cx="14.9" cy="11.3" rx="4.8" ry="5" fill="#fbe291"/>
<path d="M23 26.8 L27.8 32.3" stroke="#f08a12" stroke-width="2.4" stroke-linecap="round"/>
<circle cx="20.3" cy="23.9" r="4.1" fill="#3ba6e0" stroke="#f4f4f4" stroke-width="1.6"/></svg>
<svg style="left:512px;top:174px" width="34" height="34" viewBox="0 0 34 34"><defs><linearGradient id="rf" x1="0" y1="0" x2="0" y2="1"><stop offset="0" stop-color="#2f9436"/><stop offset=".45" stop-color="#57b72f"/><stop offset=".8" stop-color="#a9d81a"/><stop offset="1" stop-color="#e2ee08"/></linearGradient></defs>
<circle cx="17" cy="17" r="15.6" fill="#0c160c"/><circle cx="17" cy="17" r="14.2" fill="url(#rf)"/><ellipse cx="17" cy="9.5" rx="10.5" ry="6" fill="#fff" opacity=".16"/>
<path d="M4.4 16.2 H13.2 L8.5 22.6 Z M6.8 16.4 C6.8 9 14 5.5 20.3 8.1 C15 7.7 10.8 10.5 10.8 16.4 Z" fill="#fff"/>
<path d="M21.6 17.6 H29.2 L25.3 11.6 Z M27.2 17.4 C27.2 25 20 28.5 13.5 26 C19 26.3 23.4 23.5 23.4 17.4 Z" fill="#fff"/></svg>
<div style="left:568px;top:184px;width:40px;height:22px;background:#ecf1f8"></div><div class="cb" style="left:573px;top:189px"></div><div class="val" style="left:588px;top:188px">Sel</div>
<div id="groupby"><svg style="left:0;top:0" width="979" height="36" viewBox="0 0 979 36" preserveAspectRatio="none"><defs><linearGradient id="sw" x1="0" y1="0" x2="1" y2="0"><stop offset="0" stop-color="#7c9fd5"/><stop offset=".5" stop-color="#7195cd"/><stop offset="1" stop-color="#678cc6"/></linearGradient></defs><path d="M0 0 H346 Q250 3 112 24.7 Q70 31 33 36 H0 Z" fill="url(#sw)"/></svg><b>Drag a column header here to group by that column</b></div>
<div class="hd" style="left:385px;width:12px"></div>
<div class="hd" style="left:397px;width:60px">Sel</div>
<div class="hd" style="left:457px;width:71px">Clave Empleado</div>
<div class="hd" style="left:528px;width:115px">Nombre</div>
<div class="hd" style="left:643px;width:127px">Apellido Paterno</div>
<div class="hd" style="left:770px;width:125px">Apellido Materno</div>
<div class="hd" style="left:895px;width:93px">Tipo Nómina</div>
<div class="hd" style="left:988px;width:116px">Tipo Contrato</div>
<div class="hd" style="left:1104px;width:87px">Tipo Relación</div>
<div class="hd" style="left:1191px;width:70px">Salario</div>
<div class="hd" style="left:1261px;width:77px">Clave Departamento</div>
<div class="hd" style="left:1338px;width:26px;justify-content:flex-start;padding-left:8px;border-right:none">Des</div>
<div class="gr sel" style="top:299px"><span class="ind"><svg style="left:2px;top:5px" width="7" height="9" viewBox="0 0 7 9"><path d="M1.2 0.8 L5.3 4.5 L1.2 8.2" fill="none" stroke="#48609f" stroke-width="2"/></svg></span><span class="" style="left:12px;width:60px"><i class="cb" style="left:23px;top:4px"></i></span><span class="r foc" style="left:72px;width:71px">1</span><span class="" style="left:143px;width:115px">Carolina</span><span class="" style="left:258px;width:127px">Rivera</span><span class="" style="left:385px;width:125px">Armendariz</span><span class="" style="left:510px;width:93px">Quincenal</span><span class="" style="left:603px;width:116px">Base o Permanente</span><span class="" style="left:719px;width:87px">Confianza</span><span class="r" style="left:806px;width:70px">$14,800.00</span><span class="r" style="left:876px;width:77px">18</span><span class="" style="left:953px;width:26px">Geren</span></div>
<div class="gr a" style="top:319px"><span class="ind"></span><span class="" style="left:12px;width:60px"><i class="cb" style="left:23px;top:4px"></i></span><span class="r" style="left:72px;width:71px">2</span><span class="" style="left:143px;width:115px">Christian</span><span class="" style="left:258px;width:127px">Ocaña</span><span class="" style="left:385px;width:125px">Rios</span><span class="" style="left:510px;width:93px">Quincenal</span><span class="" style="left:603px;width:116px">Base o Permanente</span><span class="" style="left:719px;width:87px">Sindicalizado</span><span class="r" style="left:806px;width:70px">$6,300.00</span><span class="r" style="left:876px;width:77px">5</span><span class="" style="left:953px;width:26px">Geren</span></div>
<div class="gr b" style="top:339px"><span class="ind"></span><span class="" style="left:12px;width:60px"><i class="cb" style="left:23px;top:4px"></i></span><span class="r" style="left:72px;width:71px">3</span><span class="" style="left:143px;width:115px">Luz Maria</span><span class="" style="left:258px;width:127px">Acosta</span><span class="" style="left:385px;width:125px">Alonso</span><span class="" style="left:510px;width:93px">Quincenal</span><span class="" style="left:603px;width:116px">Base o Permanente</span><span class="" style="left:719px;width:87px">Confianza</span><span class="r" style="left:806px;width:70px">$5,630.00</span><span class="r" style="left:876px;width:77px">3</span><span class="" style="left:953px;width:26px">Direc</span></div>
<div class="gr a" style="top:359px"><span class="ind"></span><span class="" style="left:12px;width:60px"><i class="cb" style="left:23px;top:4px"></i></span><span class="r" style="left:72px;width:71px">4</span><span class="" style="left:143px;width:115px">Luis Daniel</span><span class="" style="left:258px;width:127px">Ramirez</span><span class="" style="left:385px;width:125px">Loredo</span><span class="" style="left:510px;width:93px">Quincenal</span><span class="" style="left:603px;width:116px">Base o Permanente</span><span class="" style="left:719px;width:87px">Confianza</span><span class="r" style="left:806px;width:70px">$8,900.00</span><span class="r" style="left:876px;width:77px">7</span><span class="" style="left:953px;width:26px">Geren</span></div>
<div class="gr b" style="top:379px"><span class="ind"></span><span class="" style="left:12px;width:60px"><i class="cb" style="left:23px;top:4px"></i></span><span class="r" style="left:72px;width:71px">5</span><span class="" style="left:143px;width:115px">Alma Delia</span><span class="" style="left:258px;width:127px">Samaniego</span><span class="" style="left:385px;width:125px">Ventura</span><span class="" style="left:510px;width:93px">Semanal</span><span class="" style="left:603px;width:116px">Base o Permanente</span><span class="" style="left:719px;width:87px">Sindicalizado</span><span class="r" style="left:806px;width:70px">$0.00</span><span class="r" style="left:876px;width:77px">18</span><span class="" style="left:953px;width:26px">Geren</span></div>
<div class="gr a" style="top:399px"><span class="ind"></span><span class="" style="left:12px;width:60px"><i class="cb" style="left:23px;top:4px"></i></span><span class="r" style="left:72px;width:71px">6</span><span class="" style="left:143px;width:115px">Tomás</span><span class="" style="left:258px;width:127px">Romero</span><span class="" style="left:385px;width:125px">Zepeda</span><span class="" style="left:510px;width:93px">Semanal</span><span class="" style="left:603px;width:116px">Base o Permanente</span><span class="" style="left:719px;width:87px">Sindicalizado</span><span class="r" style="left:806px;width:70px">$4,812.00</span><span class="r" style="left:876px;width:77px">7</span><span class="" style="left:953px;width:26px">Geren</span></div>
<div class="gr b" style="top:419px"><span class="ind"></span><span class="" style="left:12px;width:60px"><i class="cb" style="left:23px;top:4px"></i></span><span class="r" style="left:72px;width:71px">7</span><span class="" style="left:143px;width:115px">Angelica</span><span class="" style="left:258px;width:127px">Tadeo</span><span class="" style="left:385px;width:125px">Aldana</span><span class="" style="left:510px;width:93px">Semanal</span><span class="" style="left:603px;width:116px">Base o Permanente</span><span class="" style="left:719px;width:87px">Confianza</span><span class="r" style="left:806px;width:70px">$6,300.00</span><span class="r" style="left:876px;width:77px">6</span><span class="" style="left:953px;width:26px">Geren</span></div>
<div class="gr a" style="top:439px"><span class="ind"></span><span class="" style="left:12px;width:60px"><i class="cb" style="left:23px;top:4px"></i></span><span class="r" style="left:72px;width:71px">8</span><span class="" style="left:143px;width:115px">Yessica</span><span class="" style="left:258px;width:127px">Moreno</span><span class="" style="left:385px;width:125px">Medellin</span><span class="" style="left:510px;width:93px">Semanal</span><span class="" style="left:603px;width:116px">Base o Permanente</span><span class="" style="left:719px;width:87px">Confianza</span><span class="r" style="left:806px;width:70px">$0.00</span><span class="r" style="left:876px;width:77px">4</span><span class="" style="left:953px;width:26px">Direc</span></div>
<div class="gr b" style="top:459px"><span class="ind"></span><span class="" style="left:12px;width:60px"><i class="cb" style="left:23px;top:4px"></i></span><span class="r" style="left:72px;width:71px">9</span><span class="" style="left:143px;width:115px">Uriel</span><span class="" style="left:258px;width:127px">Reyna</span><span class="" style="left:385px;width:125px">Amaya</span><span class="" style="left:510px;width:93px">Semanal</span><span class="" style="left:603px;width:116px">Base o Permanente</span><span class="" style="left:719px;width:87px">Confianza</span><span class="r" style="left:806px;width:70px">$0.00</span><span class="r" style="left:876px;width:77px">5</span><span class="" style="left:953px;width:26px">Geren</span></div>
<div class="gr a" style="top:479px"><span class="ind"></span><span class="" style="left:12px;width:60px"><i class="cb" style="left:23px;top:4px"></i></span><span class="r" style="left:72px;width:71px">10</span><span class="" style="left:143px;width:115px">Selene Guadalupe</span><span class="" style="left:258px;width:127px">Mares</span><span class="" style="left:385px;width:125px">Izquierdo</span><span class="" style="left:510px;width:93px">Semanal</span><span class="" style="left:603px;width:116px">Base o Permanente</span><span class="" style="left:719px;width:87px">Confianza</span><span class="r" style="left:806px;width:70px">$0.00</span><span class="r" style="left:876px;width:77px">21</span><span class="" style="left:953px;width:26px">Nómin</span></div>
<div class="gr b" style="top:499px"><span class="ind"></span><span class="" style="left:12px;width:60px"><i class="cb" style="left:23px;top:4px"></i></span><span class="r" style="left:72px;width:71px">11</span><span class="" style="left:143px;width:115px">Bernardo</span><span class="" style="left:258px;width:127px">Amaya</span><span class="" style="left:385px;width:125px">Castellanos</span><span class="" style="left:510px;width:93px">Semanal</span><span class="" style="left:603px;width:116px">Base o Permanente</span><span class="" style="left:719px;width:87px">Confianza</span><span class="r" style="left:806px;width:70px">$0.00</span><span class="r" style="left:876px;width:77px">16</span><span class="" style="left:953px;width:26px">Mant</span></div>
<div class="nav" style="left:385px;width:51px"></div><div class="nav" style="left:484px;width:68px"></div>
<svg style="left:389px;top:689px" width="10" height="9" viewBox="0 0 10 9" fill="#9aa3b3"><rect x="0" y="1" width="1.5" height="7"/><path d="M6 1 V8 L2 4.500Z M10 1 V8 L6 4.500Z"/></svg><svg style="left:406px;top:689px" width="10" height="9" viewBox="0 0 10 9" fill="#9aa3b3"><path d="M5 1 V8 L1 4.500Z M9.5 1 V8 L5.5 4.500Z"/></svg><svg style="left:422px;top:689px" width="10" height="9" viewBox="0 0 10 9" fill="#9aa3b3"><path d="M7 1 V8 L3 4.500Z"/></svg>
<div style="left:443px;top:687px;font-size:11px;line-height:14px;color:#1e3a78;letter-spacing:-0.1px">1 de 11</div>
<svg style="left:488px;top:689px" width="10" height="9" viewBox="0 0 10 9" fill="#1c3f8f"><path d="M3 0.5 V8.5 L7.5 4.500Z"/></svg><svg style="left:505px;top:689px" width="10" height="9" viewBox="0 0 10 9" fill="#1c3f8f"><path d="M1 0.5 V8.5 L5 4.500Z M5.5 0.5 V8.5 L9.5 4.500Z"/></svg><svg style="left:522px;top:689px" width="10" height="9" viewBox="0 0 10 9" fill="#1c3f8f"><path d="M0 0.5 V8.5 L4 4.500Z M4 0.5 V8.5 L8 4.500Z"/><rect x="8.5" y="0.5" width="1.5" height="8"/></svg><svg style="left:539px;top:689px" width="10" height="9" viewBox="0 0 10 9" fill="#9aa3b3"><path d="M0.5 5 L3.5 8 L9.5 1.5" fill="none" stroke="#9aa3b3" stroke-width="2"/></svg>
<div id="sb"><i id="thumb"></i><svg style="left:5px;top:4px" width="6" height="9" viewBox="0 0 6 9"><path d="M5.5 0 V9 L0.5 4.500Z" fill="#dfe9f9"/></svg><svg style="left:751px;top:4px" width="6" height="9" viewBox="0 0 6 9"><path d="M0.5 0 V9 L5.5 4.500Z" fill="#dfe9f9"/></svg><svg style="left:133px;top:4px" width="8" height="9" viewBox="0 0 8 9"><rect x="0" y="0" width="1" height="9" fill="#4f6fae"/><rect x="2" y="0" width="1" height="9" fill="#4f6fae"/><rect x="4" y="0" width="1" height="9" fill="#4f6fae"/><rect x="6" y="0" width="1" height="9" fill="#4f6fae"/></svg></div>
<div id="gleft"></div><div id="redge"></div><div id="rband"></div><div id="status"><b style="left:1px">Fin del proceso</b><i style="left:693px"></i><b style="left:698px">sysdba</b><i style="left:798px"></i><b style="left:808px">Emp. 300</b><i style="left:863px"></i><b style="left:878px">Term. 1</b><i style="left:928px"></i><b style="left:933px">C:\Program Files (x86)\Acceso30\Demo\DemoAcceso.fdb</b></div>
</body>
</html>
